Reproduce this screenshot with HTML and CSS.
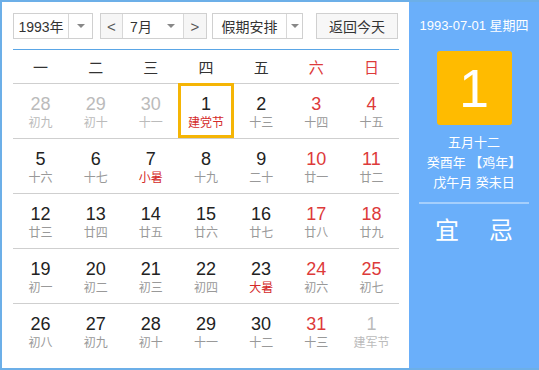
FILE: index.html
```html
<!DOCTYPE html>
<html lang="zh">
<head>
<meta charset="utf-8">
<link rel="stylesheet" href="styles.css">
</head>
<body>
<div class="cal">
  <div class="main">
    <div class="controls">
      <div class="sel year"><span class="sel-text">1993年</span><span class="sel-arrow"><i class="tri"></i></span></div>
      <div class="sel month"><span class="nav">&lt;</span><span class="sel-text m">7月</span><span class="sel-arrow noline"><i class="tri"></i></span><span class="nav">&gt;</span></div>
      <div class="sel holiday"><span class="sel-text">假期安排</span><span class="sel-arrow"><i class="tri"></i></span></div>
      <div class="btn-today">返回今天</div>
    </div>
    <div class="week">
      <span>一</span><span>二</span><span>三</span><span>四</span><span>五</span><span class="red">六</span><span class="red">日</span>
    </div>
    <div class="grid">
      <div class="row">
        <div class="day other"><b>28</b><small>初九</small></div>
        <div class="day other"><b>29</b><small>初十</small></div>
        <div class="day other"><b>30</b><small>十一</small></div>
        <div class="day selected"><b>1</b><small class="fest">建党节</small></div>
        <div class="day"><b>2</b><small>十三</small></div>
        <div class="day we"><b>3</b><small>十四</small></div>
        <div class="day we"><b>4</b><small>十五</small></div>
      </div>
      <div class="row">
        <div class="day"><b>5</b><small>十六</small></div>
        <div class="day"><b>6</b><small>十七</small></div>
        <div class="day"><b>7</b><small class="fest">小暑</small></div>
        <div class="day"><b>8</b><small>十九</small></div>
        <div class="day"><b>9</b><small>二十</small></div>
        <div class="day we"><b>10</b><small>廿一</small></div>
        <div class="day we"><b>11</b><small>廿二</small></div>
      </div>
      <div class="row">
        <div class="day"><b>12</b><small>廿三</small></div>
        <div class="day"><b>13</b><small>廿四</small></div>
        <div class="day"><b>14</b><small>廿五</small></div>
        <div class="day"><b>15</b><small>廿六</small></div>
        <div class="day"><b>16</b><small>廿七</small></div>
        <div class="day we"><b>17</b><small>廿八</small></div>
        <div class="day we"><b>18</b><small>廿九</small></div>
      </div>
      <div class="row">
        <div class="day"><b>19</b><small>初一</small></div>
        <div class="day"><b>20</b><small>初二</small></div>
        <div class="day"><b>21</b><small>初三</small></div>
        <div class="day"><b>22</b><small>初四</small></div>
        <div class="day"><b>23</b><small class="fest">大暑</small></div>
        <div class="day we"><b>24</b><small>初六</small></div>
        <div class="day we"><b>25</b><small>初七</small></div>
      </div>
      <div class="row last">
        <div class="day"><b>26</b><small>初八</small></div>
        <div class="day"><b>27</b><small>初九</small></div>
        <div class="day"><b>28</b><small>初十</small></div>
        <div class="day"><b>29</b><small>十一</small></div>
        <div class="day"><b>30</b><small>十二</small></div>
        <div class="day we"><b>31</b><small>十三</small></div>
        <div class="day other"><b>1</b><small>建军节</small></div>
      </div>
    </div>
  </div>
  <div class="side">
    <div class="side-date">1993-07-01 星期四</div>
    <div class="big-day">1</div>
    <div class="lunar">
      <div>五月十二</div>
      <div>癸酉年 【鸡年】</div>
      <div>戊午月 癸未日</div>
    </div>
    <div class="divider"></div>
    <div class="yiji"><span>宜</span><span>忌</span></div>
  </div>
</div>
</body>
</html>
```

FILE: styles.css
```css
* { box-sizing: border-box; }
html, body { margin: 0; padding: 0; background: #fff; }
body {
  font-family: "Liberation Sans", "Noto Sans CJK SC", sans-serif;
  color: #333;
}
.cal {
  width: 539px;
  height: 370px;
  display: flex;
  border: 2px solid #6cafe8;
  border-right: none;
  overflow: hidden;
}
.main {
  width: 407px;
  padding: 11px 10px 0 11px;
}
.controls {
  display: flex;
  height: 26px;
  font-size: 14px;
}
.sel {
  display: flex;
  height: 26px;
  border: 1px solid #d0d0d0;
  background: #fff;
}
.sel-text {
  display: flex;
  align-items: center;
  justify-content: center;
  color: #333;
}
.sel-arrow {
  display: flex;
  align-items: center;
  justify-content: center;
  border-left: 1px solid #d8d8d8;
}
.sel-arrow.noline { border-left: none; }
.tri {
  display: block;
  width: 0;
  height: 0;
  border-left: 4px solid transparent;
  border-right: 4px solid transparent;
  border-top: 4px solid #888;
}
.year { width: 80px; }
.year .sel-text { width: 54px; }
.year .sel-arrow { width: 24px; }
.month { width: 107px; margin-left: 7px; }
.nav {
  width: 22px;
  display: flex;
  align-items: center;
  justify-content: center;
  background: #f6f6f6;
  color: #555;
  font-size: 15px;
}
.nav:first-child { border-right: 1px solid #d8d8d8; }
.nav:last-child { border-left: 1px solid #d8d8d8; width: 23px; }
.month .sel-text.m { width: 36px; }
.month .sel-arrow { width: 24px; }
.holiday { width: 91px; margin-left: 5px; }
.holiday .sel-text { width: 73px; }
.holiday .sel-arrow { width: 16px; }
.btn-today {
  margin-left: 13px;
  width: 82px;
  height: 26px;
  border: 1px solid #d0d0d0;
  background: #f7f7f7;
  display: flex;
  align-items: center;
  justify-content: center;
  color: #333;
}
.week {
  margin-top: 10px;
  border-top: 1px solid #5aa6e6;
  display: grid;
  grid-template-columns: repeat(7, 1fr);
  height: 35px;
  border-bottom: 1px solid #cfcfcf;
  font-size: 15px;
  align-items: center;
  text-align: center;
  color: #333;
}
.red { color: #dd3a3a; }
.row {
  display: grid;
  grid-template-columns: repeat(7, 1fr);
  height: 55px;
  border-bottom: 1px solid #cfcfcf;
}
.row.last { border-bottom: none; }
.day {
  display: flex;
  flex-direction: column;
  align-items: center;
  justify-content: center;
  padding-top: 2px;
}
.day b {
  font-weight: normal;
  font-size: 18px;
  line-height: 21px;
  color: #222;
}
.day small {
  font-size: 12px;
  line-height: 15px;
  color: #999;
  margin-top: 1px;
}
.day.we b { color: #dd3a3a; }
.day .fest { color: #d42a2a; }
.day.other b, .day.other small { color: #bbb; }
.day.selected {
  border: 3px solid #f5b505;
  height: 55px;
  margin-top: -1px;
  padding-top: 3px;
}
.side {
  width: 130px;
  background: #6aaffa;
  color: #fff;
  display: flex;
  flex-direction: column;
  align-items: center;
}
.side-date {
  margin-top: 15px;
  font-size: 13px;
  line-height: 18px;
}
.big-day {
  margin-top: 16px;
  width: 75px;
  height: 74px;
  background: #ffbb00;
  border-radius: 3px;
  display: flex;
  align-items: center;
  justify-content: center;
  font-size: 54px;
  color: #fff;
}
.lunar {
  margin-top: 8px;
  font-size: 13px;
  line-height: 20px;
  text-align: center;
}
.divider {
  margin-top: 9px;
  width: 110px;
  height: 2px;
  background: rgba(255,255,255,0.4);
}
.yiji {
  margin-top: 12px;
  display: flex;
  gap: 30px;
  font-size: 24px;
  line-height: 30px;
}
```
